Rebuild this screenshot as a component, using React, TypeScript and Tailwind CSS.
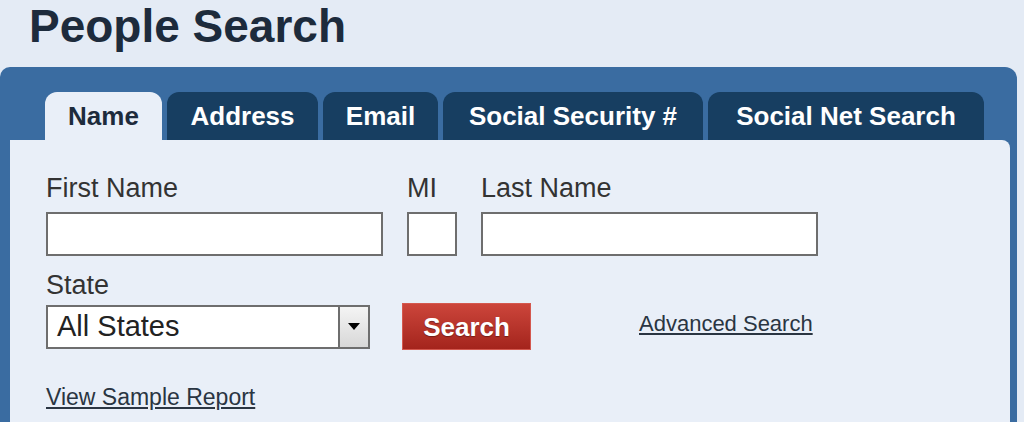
import React from 'react';

const tabs = [
  { label: 'Name', w: 'w-[117px]' },
  { label: 'Address', w: 'w-[151px]' },
  { label: 'Email', w: 'w-[115px]' },
  { label: 'Social Security #', w: 'w-[260px]' },
  { label: 'Social Net Search', w: 'w-[276px]' },
];

const App = () => {
  return (
    <div
      className="w-[1024px] h-[422px] overflow-hidden bg-[#e4ebf5] text-[#333]"
      style={{ fontFamily: '"Liberation Sans", Arial, sans-serif' }}
    >
      {/* Title */}
      <h1 className="pl-[29px] h-[67px] text-[46px] leading-[52px] font-bold text-[#1d2b3c]">
        People Search
      </h1>

      {/* Blue frame */}
      <div className="w-[1017px] h-[360px] bg-[#3a6ca1] rounded-tl-[10px] rounded-tr-[12px] pt-[25px] pl-[10px] pr-[7px]">
        {/* Tabs */}
        <div className="flex gap-[5px] pl-[35px] h-[48px]">
          {tabs.map((t, i) => (
            <div
              key={t.label}
              className={
                i === 0
                  ? `${t.w} h-[48px] text-center rounded-t-[12px] bg-[#e9eff8] text-[#1d2b3c] text-[26px] font-bold leading-[48px]`
                  : `${t.w} h-[48px] text-center rounded-t-[12px] bg-[#173e61] text-white text-[26px] font-bold leading-[48px]`
              }
            >
              {t.label}
            </div>
          ))}
        </div>

        {/* Content panel */}
        <div className="h-[300px] bg-[#e9eff8] rounded-tr-[8px] pl-[36px] pt-[33px]">
          <div className="flex gap-[24px]">
            <div className="flex flex-col">
              <label className="text-[27px] leading-[30px] h-[39px] text-[#333]">First Name</label>
              <div className="w-[337px] h-[44px] bg-white border-2 border-[#6e6e6e]" />
            </div>
            <div className="flex flex-col">
              <label className="text-[27px] leading-[30px] h-[39px] text-[#333]">MI</label>
              <div className="w-[50px] h-[44px] bg-white border-2 border-[#6e6e6e]" />
            </div>
            <div className="flex flex-col">
              <label className="text-[27px] leading-[30px] h-[39px] text-[#333]">Last Name</label>
              <div className="w-[337px] h-[44px] bg-white border-2 border-[#6e6e6e]" />
            </div>
          </div>

          <div className="mt-[14px] text-[27px] leading-[30px] h-[33px] text-[#333]">State</div>
          <div className="flex items-center">
            <div className="w-[324px] h-[44px] bg-white border-2 border-[#6e6e6e] flex">
              <div className="flex-1 pl-[9px] text-[29px] leading-[38px] text-[#222]">All States</div>
              <div className="w-[30px] h-full border-l-2 border-[#6e6e6e] bg-gradient-to-b from-[#f4f4f4] to-[#d8d8d8] flex items-center justify-center">
                <svg width="12" height="7" viewBox="0 0 12 7">
                  <path d="M0 0 L12 0 L6 7 Z" fill="#000" />
                </svg>
              </div>
            </div>
            <button className="ml-[32px] w-[129px] h-[47px] bg-gradient-to-b from-[#cc453b] to-[#a4241c] border border-[#d4584e] text-white text-[26px] font-bold leading-[42px] [text-shadow:0_1px_1px_rgba(0,0,0,0.35)]">
              Search
            </button>
            <a className="ml-[108px] mb-[6px] text-[22px] leading-[26px] underline text-[#2a3542]">Advanced Search</a>
          </div>

          <a className="block mt-[34px] text-[23px] leading-[26px] underline text-[#2a3542]">View Sample Report</a>
        </div>
      </div>
    </div>
  );
};

export default App;
